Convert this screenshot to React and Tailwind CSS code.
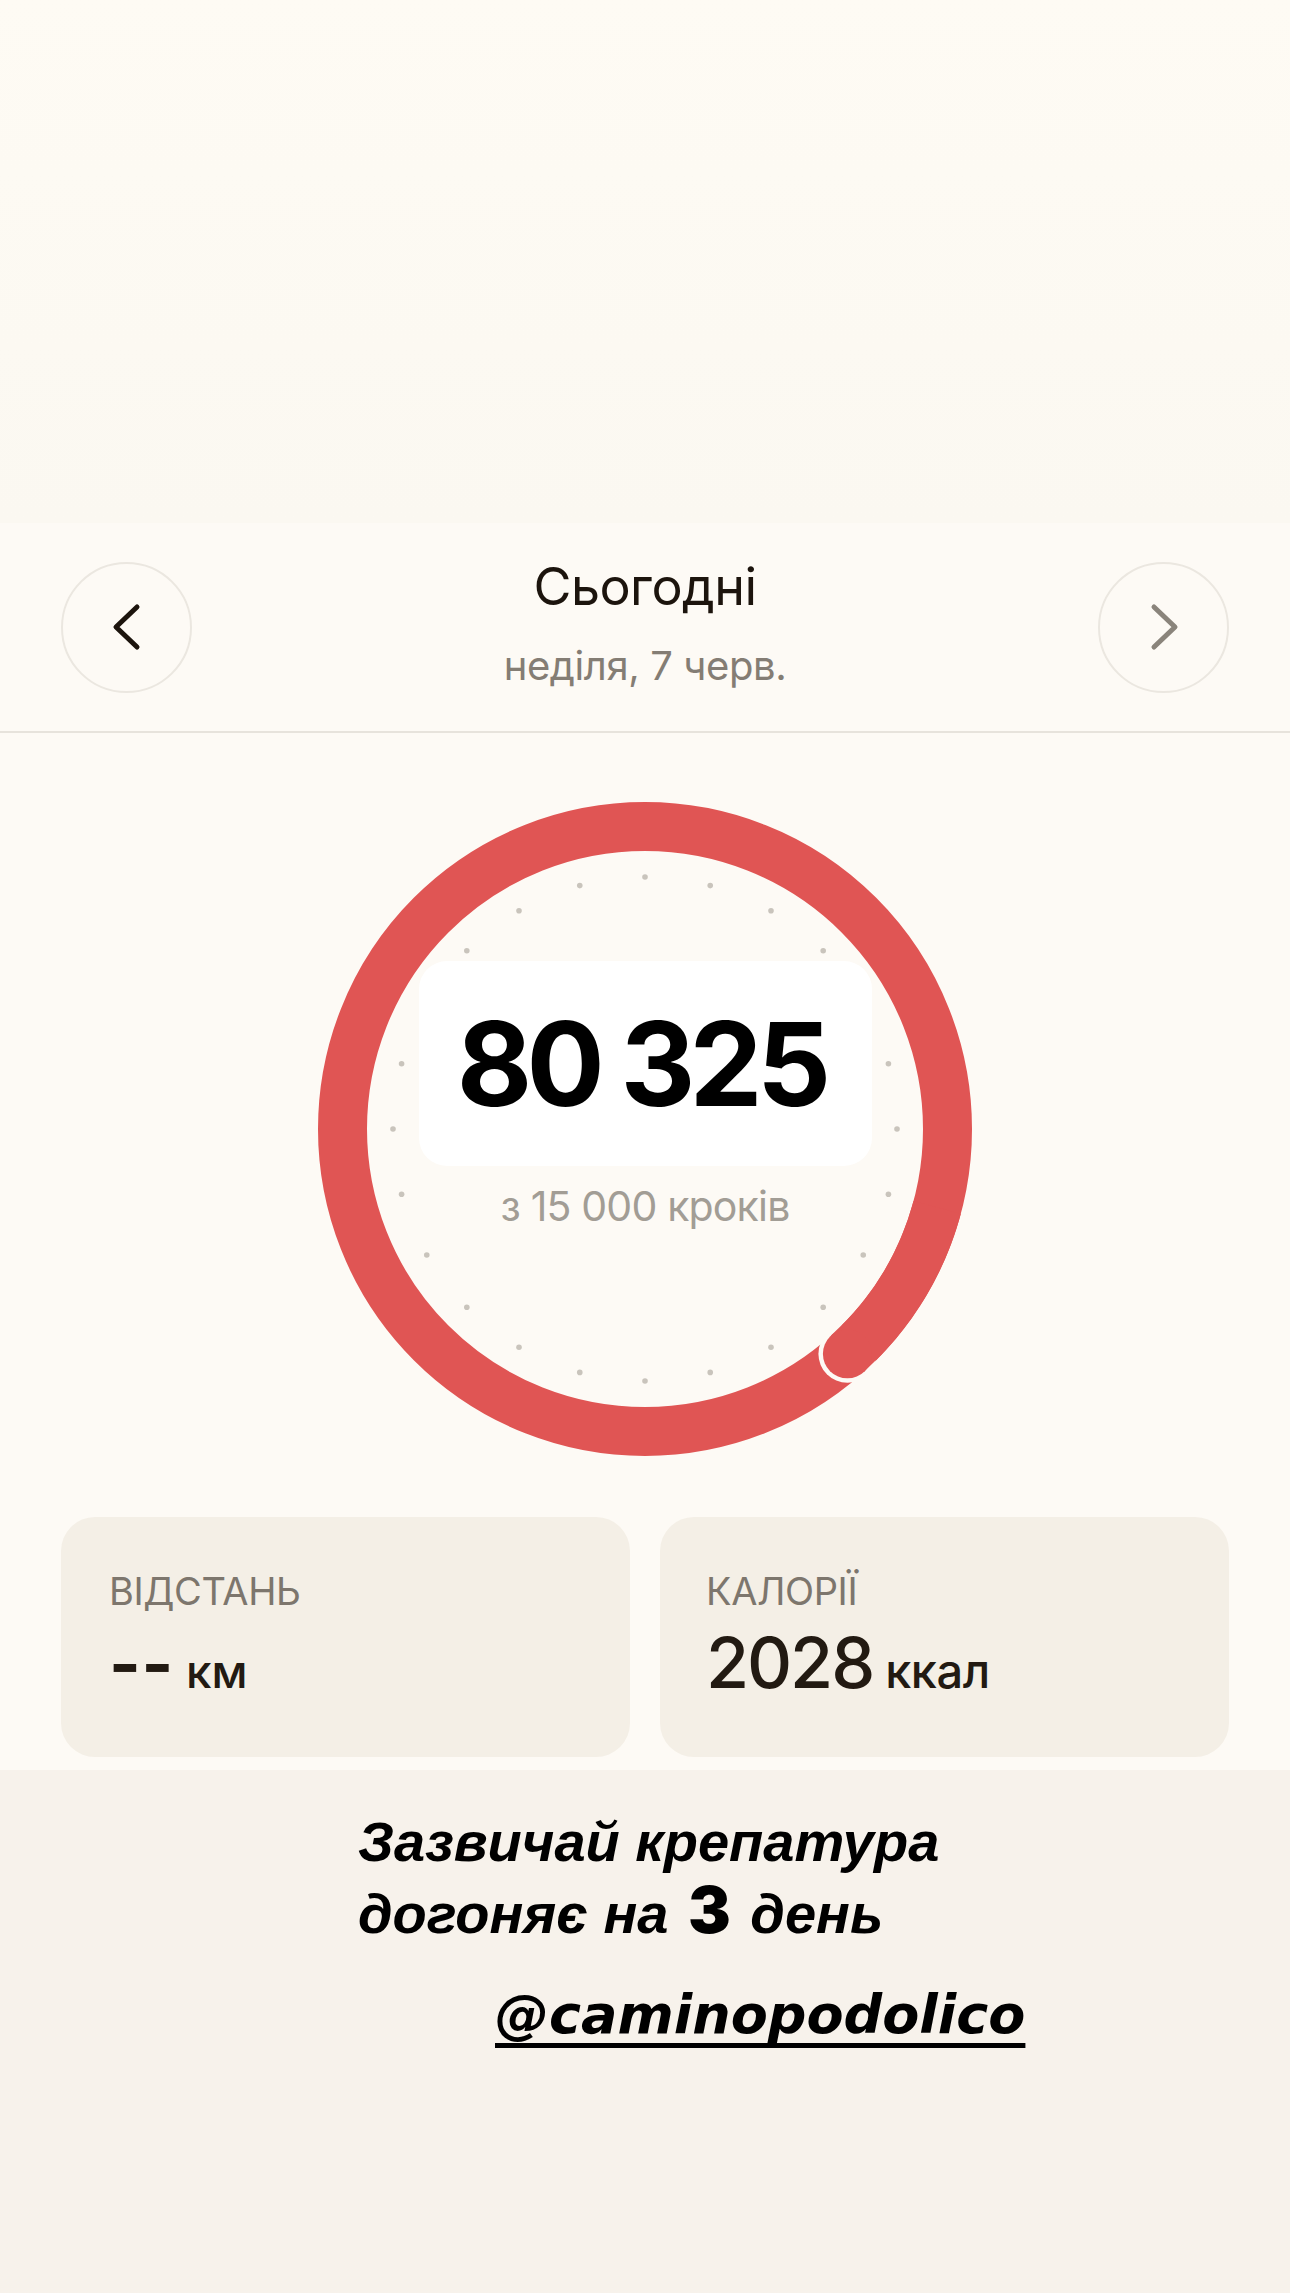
import React from "react";

const C = 327;
const R = 302.5;
const dots = Array.from({ length: 24 }, (_, i) => {
  const a = (i * 15 * Math.PI) / 180;
  return { x: C + 252 * Math.sin(a), y: C - 252 * Math.cos(a) };
});
const pt = (deg) => {
  const a = (deg * Math.PI) / 180;
  return [C + R * Math.cos(a), C + R * Math.sin(a)];
};
const [sx, sy] = pt(15);
const [ex, ey] = pt(48);

function Ring() {
  return (
    <svg width="654" height="654" viewBox="0 0 654 654" className="absolute inset-0">
      {dots.map((d, i) => (
        <circle key={i} cx={d.x} cy={d.y} r="2.8" fill="#c9c4bc" />
      ))}
      <circle cx={C} cy={C} r={R} fill="none" stroke="#e05554" strokeWidth="49" />
      <circle cx={ex} cy={ey} r="29" fill="#fdfaf5" />
      <path d={`M ${sx} ${sy} A ${R} ${R} 0 0 1 ${ex} ${ey}`} fill="none" stroke="#e05554" strokeWidth="49" />
      <circle cx={ex} cy={ey} r="24.5" fill="#e05554" />
    </svg>
  );
}

function Chevron({ dir, color }) {
  return (
    <svg width="40" height="50" viewBox="0 0 40 50">
      {dir === "left" ? (
        <polyline points="30,5 9,25 30,45" fill="none" stroke={color} strokeWidth="5" strokeLinecap="round" strokeLinejoin="round" />
      ) : (
        <polyline points="10,5 31,25 10,45" fill="none" stroke={color} strokeWidth="5" strokeLinecap="round" strokeLinejoin="round" />
      )}
    </svg>
  );
}

export default function App() {
  return (
    <div className="w-[1290px] min-h-[2293px] flex flex-col bg-[#fdfaf5]" style={{ fontFamily: "Inter, 'Noto Sans', sans-serif" }}>
      <div className="h-[523px] bg-gradient-to-b from-[#fefbf4] to-[#fbf8f1]" />
      <div className="h-[210px] flex items-center justify-between px-[61px] border-b-2 border-[#e7e3dc] bg-[#fdfaf5]">
        <div className="w-[131px] h-[131px] rounded-full border-2 border-[#ebe7e0] flex items-center justify-center">
          <Chevron dir="left" color="#1c140d" />
        </div>
        <div className="flex flex-col items-center pb-[8px]">
          <div className="text-[52px] leading-[60px] text-[#1c140d] tracking-[-0.01em]">Сьогодні</div>
          <div className="text-[40px] leading-[46px] mt-[26px] text-[#847d74] tracking-[-0.01em]">неділя, 7 черв.</div>
        </div>
        <div className="w-[131px] h-[131px] rounded-full border-2 border-[#ebe7e0] flex items-center justify-center">
          <Chevron dir="right" color="#8a847b" />
        </div>
      </div>
      <div className="flex flex-col items-center bg-[#fdfaf5] pb-[13px]">
        <div className="relative w-[654px] h-[654px] mt-[69px]">
          <Ring />
          <div className="relative flex flex-col items-center pt-[159px]">
            <div className="w-[453px] h-[205px] rounded-[28px] bg-white flex items-center justify-center">
              <span className="text-[116px] leading-none font-bold text-black tracking-[-0.05em] mr-[8px]">80 325</span>
            </div>
            <div className="mt-[16px] text-[41px] leading-[48px] text-[#a29d95] tracking-[-0.02em]">з 15 000 кроків</div>
          </div>
        </div>
        <div className="w-full px-[61px] mt-[61px] grid grid-cols-2 gap-[30px]">
          <div className="h-[240px] rounded-[34px] bg-[#f4efe6] pl-[48px] pt-[52px]">
            <div className="text-[38px] leading-[44px] text-[#7d766d] tracking-[-0.01em]">ВІДСТАНЬ</div>
            <div className="mt-[14px] flex items-baseline gap-[12px] text-[#221a12]">
              <span className="text-[68px] leading-[72px] font-bold tracking-[0.01em]">--</span>
              <span className="text-[46px] leading-[72px] font-medium">км</span>
            </div>
          </div>
          <div className="h-[240px] rounded-[34px] bg-[#f4efe6] pl-[46px] pt-[52px]">
            <div className="text-[38px] leading-[44px] text-[#7d766d] tracking-[-0.01em]">КАЛОРІЇ</div>
            <div className="mt-[14px] flex items-baseline gap-[12px] text-[#221a12]">
              <span className="text-[70px] leading-[72px] font-medium tracking-[-0.03em]">2028</span>
              <span className="text-[47px] leading-[72px] font-medium tracking-[-0.01em]">ккал</span>
            </div>
          </div>
        </div>
      </div>
      <div className="flex-1 bg-[#f7f2eb] pt-[38px]">
        <div className="ml-[358px] text-[56px] leading-[68px] font-bold italic text-black" style={{ fontFamily: "'Liberation Sans', Arial, sans-serif" }}>
          <div>Зазвичай крепатура</div>
          <div>
            догоняє на <span className="not-italic font-black text-[64px] mx-[4px]" style={{ fontFamily: "Inter, sans-serif" }}>3</span> день
          </div>
        </div>
        <div className="ml-[495px] mt-[34px]">
          <span className="text-[54px] leading-[66px] font-bold italic text-black underline decoration-[5px] underline-offset-[10px] [text-decoration-skip-ink:none]" style={{ fontFamily: "'DejaVu Sans', sans-serif" }}>
            @caminopodolico
          </span>
        </div>
      </div>
    </div>
  );
}
